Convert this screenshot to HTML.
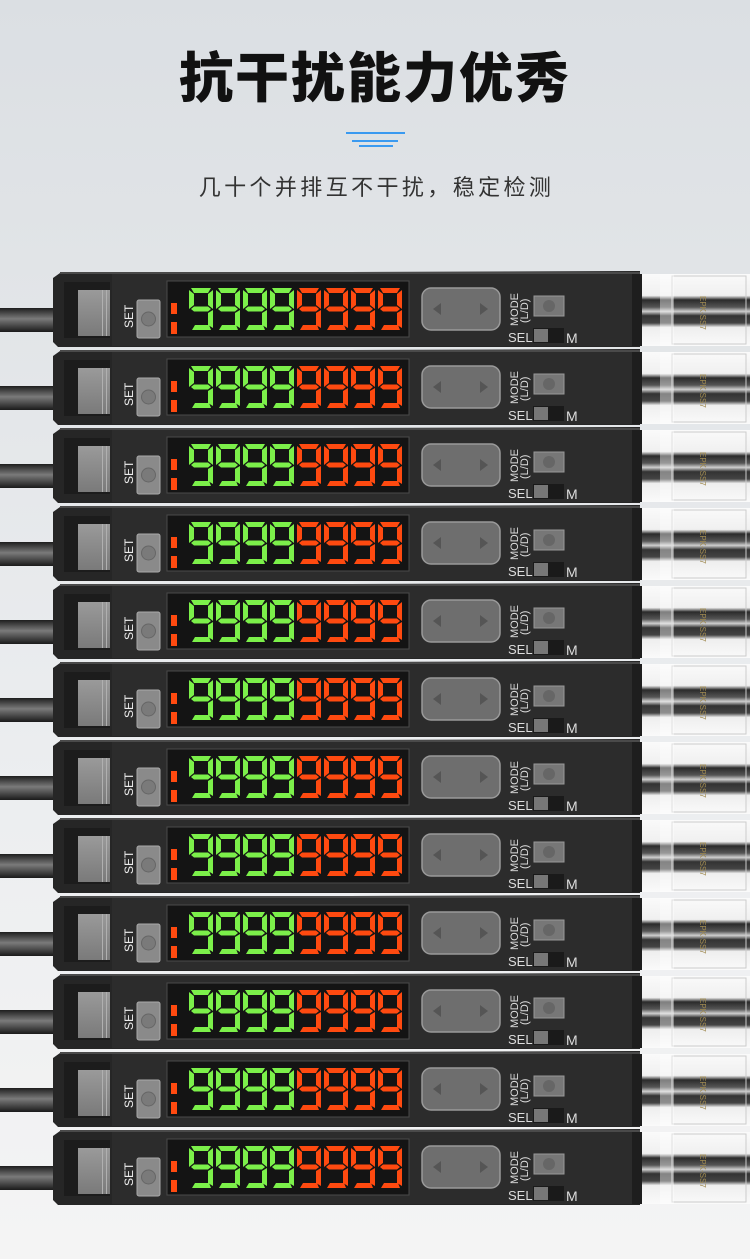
<!DOCTYPE html>
<html><head><meta charset="utf-8"><style>
html,body{margin:0;padding:0}
body{width:750px;height:1259px;overflow:hidden;position:relative;background:linear-gradient(#dbdfe3 0px,#e1e4e7 260px,#eceef0 800px,#f4f4f4 1259px);font-family:"Liberation Sans","Noto Sans CJK SC",sans-serif}
.t{position:absolute;left:0;width:750px;text-align:center}
h1{margin:0;top:44px;font-size:54px;font-weight:900;color:#111;letter-spacing:2px;line-height:70px}
.sub{top:172px;font-size:22px;color:#333;letter-spacing:3.4px;line-height:32px;padding-left:3px;box-sizing:border-box}
.bl{position:absolute;height:2px;background:#3a9af0}
svg{position:absolute;left:0;top:0}
</style></head><body>
<h1 class="t">抗干扰能力优秀</h1>
<div class="bl" style="left:346px;top:132px;width:59px"></div>
<div class="bl" style="left:352px;top:140px;width:46px"></div>
<div class="bl" style="left:359px;top:145px;width:34px"></div>
<div class="t sub">几十个并排互不干扰，稳定检测</div>

<svg width="750" height="1259" viewBox="0 0 750 1259">
<defs>
<linearGradient id="cab" x1="0" y1="0" x2="0" y2="1"><stop offset="0" stop-color="#1e1e1e"/><stop offset=".45" stop-color="#7a7a7a"/><stop offset="1" stop-color="#1a1a1a"/></linearGradient>
<linearGradient id="gb" x1="0" y1="0" x2="0" y2="1"><stop offset="0" stop-color="#9a9a9a"/><stop offset="1" stop-color="#7a7a7a"/></linearGradient>
<linearGradient id="rc" x1="0" y1="0" x2="0" y2="1"><stop offset="0" stop-color="#fafafa"/><stop offset=".3" stop-color="#f0f0f0"/><stop offset=".36" stop-color="#2a2a2a"/><stop offset=".46" stop-color="#555"/><stop offset=".52" stop-color="#cfcfcf"/><stop offset=".58" stop-color="#333"/><stop offset=".68" stop-color="#444"/><stop offset=".74" stop-color="#eee"/><stop offset="1" stop-color="#fafafa"/></linearGradient>
<g id="d">
<polygon points="2,0 22,0 19,5 5,5"/>
<polygon points="0,2 5,6 5,17 0,21"/>
<polygon points="24,2 24,21 19,17 19,6"/>
<polygon points="2,21 5,18.5 19,18.5 22,21 19,23.5 5,23.5"/>
<polygon points="24,22 24,40 19,37 19,25"/>
<polygon points="3,42 6,37 20,37 22,42"/>
</g>
<g id="u">
<rect x="0" y="38" width="60" height="24" fill="url(#cab)"/>
<rect x="630" y="4" width="120" height="72" fill="url(#rc)"/>
<rect x="672" y="6" width="74" height="68" fill="none" stroke="#ccc" stroke-width="1"/>
<rect x="660" y="4" width="14" height="72" fill="#fff" opacity=".4"/>
<text x="0" y="0" transform="translate(700,26) rotate(90)" font-size="8" fill="#a08a50" font-family="Liberation Sans">EPK-SS7</text>
<path d="M53,8 L60,3 L640,1 L640,77 L58,77 L53,72 Z" fill="#262626"/>
<rect x="60" y="2" width="580" height="2" fill="#4a4a4a"/>
<rect x="112" y="4" width="520" height="72" fill="#2c2c2c"/>
<rect x="632" y="4" width="10" height="72" fill="#1e1e1e"/>
<rect x="64" y="12" width="46" height="56" fill="#1c1c1c"/>
<rect x="78" y="20" width="32" height="46" fill="url(#gb)"/>
<rect x="102" y="20" width="1" height="46" fill="#b0b0b0"/><rect x="106" y="20" width="1" height="46" fill="#b0b0b0"/>
<text transform="translate(133,58) rotate(-90)" font-size="12" fill="#eee" font-family="Liberation Sans">SET</text>
<rect x="137" y="30" width="23" height="38" rx="2" fill="#8a8a8a" stroke="#aaa" stroke-width="1"/>
<circle cx="148.5" cy="49" r="7" fill="#7a7a7a" stroke="#666"/>
<rect x="167" y="11" width="242" height="56" fill="#141414" stroke="#4a4a4a"/>
<rect x="171" y="33" width="6" height="11" fill="#ff4a10"/>
<rect x="171" y="52" width="6" height="12" fill="#ff4a10"/>
<g fill="#7cf04a"><use href="#d" x="189" y="18"/><use href="#d" x="216" y="18"/><use href="#d" x="243" y="18"/><use href="#d" x="270" y="18"/></g>
<g fill="#ff4a10"><use href="#d" x="297" y="18"/><use href="#d" x="324" y="18"/><use href="#d" x="351" y="18"/><use href="#d" x="378" y="18"/></g>
<rect x="422" y="18" width="78" height="42" rx="9" fill="#6e6e6e" stroke="#9a9a9a" stroke-width="1.5"/>
<polygon points="433,39 441,33 441,45" fill="#555"/><polygon points="488,39 480,33 480,45" fill="#555"/>
<text transform="translate(518,56) rotate(-90)" font-size="11" fill="#ddd" font-family="Liberation Sans">MODE</text>
<text transform="translate(528,53) rotate(-90)" font-size="11" fill="#ddd" font-family="Liberation Sans">(L/D)</text>
<rect x="534" y="26" width="30" height="20" fill="#777" stroke="#999"/>
<circle cx="549" cy="36" r="6" fill="#666"/>
<text x="508" y="72" font-size="13" fill="#ddd" font-family="Liberation Sans">SEL</text>
<rect x="533" y="58" width="31" height="15" fill="#1a1a1a"/>
<rect x="534" y="59" width="14" height="13" fill="#777"/>
<text x="566" y="73" font-size="14" fill="#ddd" font-family="Liberation Sans">M</text>
</g>
</defs>
<use href="#u" y="270"/><use href="#u" y="348"/><use href="#u" y="426"/><use href="#u" y="504"/>
<use href="#u" y="582"/><use href="#u" y="660"/><use href="#u" y="738"/><use href="#u" y="816"/>
<use href="#u" y="894"/><use href="#u" y="972"/><use href="#u" y="1050"/><use href="#u" y="1128"/>
</svg>
</body></html>
